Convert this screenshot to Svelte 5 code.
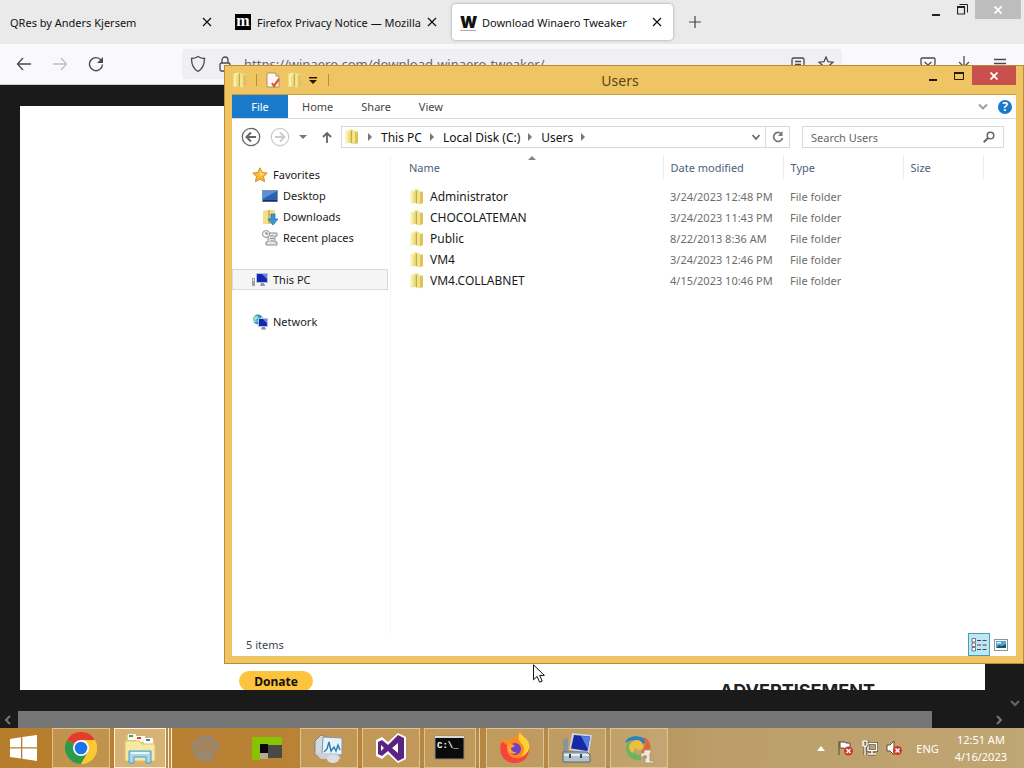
<script lang="ts">
    let tabs = [
        { title: 'QRes by Anders Kjersem', icon: '' },
        { title: 'Firefox Privacy Notice — Mozilla', icon: 'm' },
        { title: 'Download Winaero Tweaker', icon: 'w' },
    ];
    let active_tab = $state(2);

    let url = $state('https://winaero.com/download-winaero-tweaker/');
    let search = $state('');

    let ribbon = ['Home', 'Share', 'View'];
    let path = ['This PC', 'Local Disk (C:)', 'Users'];

    let favorites = [
        { name: 'Desktop', icon: 'desktop' },
        { name: 'Downloads', icon: 'downloads' },
        { name: 'Recent places', icon: 'recent' },
    ];

    let folders = [
        { name: 'Administrator', date: '3/24/2023 12:48 PM' },
        { name: 'CHOCOLATEMAN', date: '3/24/2023 11:43 PM' },
        { name: 'Public', date: '8/22/2013 8:36 AM' },
        { name: 'VM4', date: '3/24/2023 12:46 PM' },
        { name: 'VM4.COLLABNET', date: '4/15/2023 10:46 PM' },
    ];

    let apps = [
        { id: 'chrome', label: 'Google Chrome', look: 'open' },
        { id: 'explorer', label: 'File Explorer', look: 'open current stack' },
        { id: 'paw', label: 'Paw', look: '' },
        { id: 'green', label: 'Screen tool', look: '' },
        { id: 'perf', label: 'Performance Monitor', look: 'open' },
        { id: 'vs', label: 'Visual Studio', look: 'open' },
        { id: 'cmd', label: 'Command Prompt', look: 'open stack' },
        { id: 'firefox', label: 'Firefox', look: 'open' },
        { id: 'pc', label: 'System Properties', look: 'open' },
        { id: 'tweak', label: 'Installer', look: 'open' },
    ];
</script>

{#snippet folder()}
    <svg width="16" height="16" viewBox="0 0 16 16">
        <path d="M1.500 2 6 .5V14l-4.500 1z" fill="#f8efb0" />
        <path d="M6 .5h3V15L6 14z" fill="#e6d56c" />
        <path d="M7.500 2 10 1l1 1.500 3-.5v12l-3.500 1.500-3-1z" fill="#f2e48c" />
        <path d="M11 3h3v11l-3 1z" fill="#dcc65c" />
        <path d="M4 3h2v11H4z" fill="#eddf82" />
        <path d="M12 9h2v4h-2z" fill="#eab85a" />
        <path d="M7.500 2v12" stroke="#b5a040" stroke-width=".8" />
    </svg>
{/snippet}

{#snippet cross(size)}
    <svg width={size} height={size} viewBox="0 0 10 10"><path d="m1 1 8 8M9 1 1 9" fill="none" stroke="currentColor" stroke-width="1.200" /></svg>
{/snippet}

{#snippet bold_cross()}
    <svg width="8" height="8" viewBox="0 0 8 8"><path d="m.5.5 7 7m0-7-7 7" stroke="#fff" stroke-width="1.800" /></svg>
{/snippet}

{#snippet screen(x, y, w, h)}
    <rect {x} {y} width={w} height={h} fill="#b9c3d4" />
    <rect x={x + 1} y={y + 1} width={w - 2} height={h - 2} fill="#1526b4" />
    <path d="M{x + w / 2} {y + 1}h{w / 2 - 1}v{h / 2}z" fill="#6d86ee" />
{/snippet}

<div class="desktop">
    <main class="browser">
        <header class="tabbar">
            {#each tabs as tab, i}
                <div class="tab" class:active={i === active_tab}>
                    <button class="tab-title" onclick={() => active_tab = i}>
                        {#if tab.icon === 'm'}
                            <span class="moz">m</span>
                        {:else if tab.icon === 'w'}
                            <span class="win">W</span>
                        {/if}
                        <span class="tab-text">{tab.title}</span>
                    </button>
                    <button class="tab-close" aria-label="Close tab">{@render cross(10)}</button>
                </div>
            {/each}
            <button class="new-tab" aria-label="New tab">
                <svg width="14" height="14" viewBox="0 0 14 14"><path d="M7 1v12M1 7h12" stroke="#444" stroke-width="1.200" /></svg>
            </button>
            <div class="browser-controls">
                <button aria-label="Minimize"><svg width="8" height="14" viewBox="0 0 8 14"><path d="M0 11h8v2H0z" fill="#222" /></svg></button>
                <button aria-label="Restore"><svg width="11" height="11" viewBox="0 0 11 11" fill="none" stroke="#222"><path d="M.5 3h7v7h-7z" stroke-width="1.200" /><path d="M2.500.5h8v8" /><path d="M0 3h8" stroke-width="2" /></svg></button>
                <button class="grey-close" aria-label="Close">{@render bold_cross()}</button>
            </div>
        </header>

        <div class="toolbar">
            <button aria-label="Back"><svg width="16" height="16" viewBox="0 0 16 16" fill="none" stroke="#4a4a50" stroke-width="1.300"><path d="M15 8H1.500M7 2 1.500 8 7 14" /></svg></button>
            <button aria-label="Forward"><svg width="16" height="16" viewBox="0 0 16 16" fill="none" stroke="#c0c0c4" stroke-width="1.300"><path d="M1 8h13.500M9 2l5.500 6L9 14" /></svg></button>
            <button aria-label="Reload"><svg width="16" height="16" viewBox="0 0 16 16"><path d="M13 4A6.500 6.500 0 1 0 14.500 8.500" fill="none" stroke="#4a4a50" stroke-width="1.400" /><path d="M15 1v6H9z" fill="#4a4a50" /></svg></button>
            <div class="urlbar">
                <svg width="16" height="18" viewBox="0 0 16 18" fill="none" stroke="#4a4a50" stroke-width="1.300"><path d="M8 1.500c2 1.500 4 2 6.500 2 0 6-1.500 10-6.500 13C3 13.500 1.500 9.500 1.500 3.500c2.500 0 4.500-.5 6.500-2z" /></svg>
                <svg width="12" height="16" viewBox="0 0 12 16" fill="none" stroke="#4a4a50" stroke-width="1.300"><rect x="1" y="7" width="10" height="8" rx="1.500" /><path d="M3 7V4a3 3 0 0 1 6 0v3" /></svg>
                <input type="text" aria-label="Address" bind:value={url} />
                <svg width="14" height="14" viewBox="0 0 14 14" fill="none" stroke="#4a4a50" stroke-width="1.300"><rect x="1" y="1" width="12" height="12" rx="1.500" /><path d="M4 4.500h6M4 7.500h6M4 10h4" /></svg>
                <svg width="16" height="16" viewBox="0 0 16 16" fill="none" stroke="#4a4a50" stroke-width="1.300"><path d="m8 1 2 4.700 5 .5-3.800 3.400 1.200 5L8 12l-4.400 2.600 1.200-5L1 6.200l5-.5z" /></svg>
            </div>
            <div class="tools">
                <button aria-label="Pocket"><svg width="16" height="14" viewBox="0 0 16 14" fill="none" stroke="#4a4a50" stroke-width="1.300"><path d="M2 1h12a1 1 0 0 1 1 1v4a7 7 0 0 1-14 0V2a1 1 0 0 1 1-1z" /><path d="m4.500 5 3.500 3 3.500-3" /></svg></button>
                <button aria-label="Downloads"><svg width="14" height="16" viewBox="0 0 14 16" fill="none" stroke="#4a4a50" stroke-width="1.300"><path d="M7 0v11M2 6l5 5 5-5M1 15h12" /></svg></button>
                <button aria-label="Menu"><svg width="14" height="14" viewBox="0 0 14 14" stroke="#4a4a50" stroke-width="1.300"><path d="M1 2.500h12M1 6.500h12M1 11h12" /></svg></button>
            </div>
        </div>

        <div class="viewport">
            <div class="sheet">
                <div class="sheet-end">
                    <button class="donate">Donate</button>
                    <strong class="advert">ADVERTISEMENT</strong>
                </div>
            </div>
            <svg class="v-down" width="10" height="7" viewBox="0 0 10 7"><path d="m1 1 4 4 4-4" fill="none" stroke="#666" stroke-width="2" /></svg>
        </div>
        <div class="hscroll">
            <svg width="8" height="10" viewBox="0 0 8 10"><path d="M6 1 2 5l4 4" fill="none" stroke="#777" stroke-width="2" /></svg>
            <div class="thumb"></div>
            <svg class="h-right" width="8" height="10" viewBox="0 0 8 10"><path d="m2 1 4 4-4 4" fill="none" stroke="#777" stroke-width="2" /></svg>
        </div>
    </main>

    <section class="explorer">
        <header class="titlebar">
            <div class="quick">
                {@render folder()}
                <i></i>
                <svg width="16" height="16" viewBox="0 0 16 16"><path d="M2 1h9l3 3v11H2z" fill="#fdf8f4" stroke="#b58f6a" /><path d="M11 1v3h3" fill="#ddd" stroke="#b58f6a" /><path d="m7 11 2 3 5-7" fill="none" stroke="#d95b35" stroke-width="2.200" /></svg>
                {@render folder()}
                <svg class="more" width="8" height="7" viewBox="0 0 8 7"><path d="M0 0h8v1.500H0zM0 3h8L4 7z" fill="#2c1600" /></svg>
                <i></i>
            </div>
            <h1>Users</h1>
            <div class="controls">
                <button aria-label="Minimize"><svg width="8" height="12" viewBox="0 0 8 12"><path d="M0 9h8v2H0z" fill="#2c1600" /></svg></button>
                <button aria-label="Maximize"><svg width="10" height="8" viewBox="0 0 10 8"><path d="M.5 1h9v6.500h-9z" fill="none" stroke="#2c1600" /><path d="M0 1h10" stroke="#2c1600" stroke-width="2" /></svg></button>
                <button class="red-close" aria-label="Close">{@render bold_cross()}</button>
            </div>
        </header>

        <nav class="ribbon">
            <button class="file">File</button>
            {#each ribbon as item}
                <button>{item}</button>
            {/each}
            <svg class="expand" width="10" height="8" viewBox="0 0 10 8"><path d="m1 1.500 4 4 4-4" fill="none" stroke="#999" stroke-width="1.800" /></svg>
            <button class="help" aria-label="Help">?</button>
        </nav>

        <div class="address">
            <button aria-label="Back"><svg width="20" height="20" viewBox="0 0 20 20" fill="none" stroke="#666"><circle cx="10" cy="10" r="8.700" stroke-width="1.300" /><path d="M15 10H6M10 5.500 5.500 10l4.500 4.500" stroke-width="2" /></svg></button>
            <button aria-label="Forward"><svg width="20" height="20" viewBox="0 0 20 20" fill="none" stroke="#ccc"><circle cx="10" cy="10" r="8.700" stroke-width="1.200" /><path d="M5 10h9M10 5.500l4.500 4.500-4.500 4.500" stroke-width="2" /></svg></button>
            <button aria-label="Recent locations"><svg width="8" height="4" viewBox="0 0 8 4"><path d="M0 0h8L4 4z" fill="#777" /></svg></button>
            <button class="up" aria-label="Up"><svg width="10" height="12" viewBox="0 0 10 12"><path d="M5 12V2M1 6l4-4 4 4" fill="none" stroke="#666" stroke-width="1.800" /></svg></button>
            <div class="crumbs">
                {@render folder()}
                {#each path as part}
                    <svg class="sep" width="4" height="8" viewBox="0 0 4 8"><path d="M0 0v8l4-4z" fill="#777" /></svg>
                    <button>{part}</button>
                {/each}
                <svg class="sep" width="4" height="8" viewBox="0 0 4 8"><path d="M0 0v8l4-4z" fill="#777" /></svg>
                <button class="history" aria-label="Previous locations"><svg width="8" height="7" viewBox="0 0 8 7"><path d="m.5 1 3.500 4 3.500-4" fill="none" stroke="#666" stroke-width="1.800" /></svg></button>
                <button class="refresh" aria-label="Refresh"><svg width="12" height="12" viewBox="0 0 12 12"><path d="M9.500 3A4.500 4.500 0 1 0 10.500 7" fill="none" stroke="#777" stroke-width="1.700" /><path d="M10.500 0v5H6z" fill="#777" /></svg></button>
            </div>
            <label class="search">
                <input type="text" aria-label="Search Users" placeholder="Search Users" bind:value={search} />
                <svg width="12" height="12" viewBox="0 0 12 12" fill="none" stroke="#666"><circle cx="7.500" cy="4.500" r="3.300" stroke-width="1.500" /><path d="m5 7-4.300 4.300" stroke-width="2" /></svg>
            </label>
        </div>

        <div class="body">
            <aside>
                <a href="#favorites">
                    <svg width="16" height="16" viewBox="0 0 16 16"><path d="m8 .8 2.200 4.700 5.100.6-3.800 3.500 1.100 5.100L8 12.200l-4.600 2.500 1.100-5.100L.7 6.100l5.100-.6z" fill="#fbb93c" stroke="#dd8a24" /><path d="m8 3 1.500 3.300 3 .4L8 9z" fill="#ffe38c" /></svg>
                    Favorites
                </a>
                {#each favorites as item}
                    <a class="sub" href="#{item.icon}">
                        <svg width="16" height="16" viewBox="0 0 16 16">
                            {#if item.icon === 'desktop'}
                                <rect x=".5" y="2.500" width="15" height="11" fill="#2a60b4" stroke="#7d92ae" />
                                <path d="M1 3h14L1 11z" fill="#5a90d8" />
                                <path d="M1 12h14v1.500H1z" fill="#1d2f50" />
                            {:else if item.icon === 'downloads'}
                                <path d="M1 2 6 1h7v14H1z" fill="#efdf88" />
                                <path d="M6 1h2v14l-2-1z" fill="#cfb850" />
                                <path d="M9 5h4v5h3l-5 6-5-6h3z" fill="#3796dc" stroke="#1b6db0" stroke-width=".7" />
                            {:else}
                                <path d="M4 3h11v3h-2v6h2v3H4v-3h2V6H4z" fill="#e4e6e8" stroke="#8a9096" />
                                <path d="M8 6h4M8 8.500h4M8 11h4" stroke="#8a9096" />
                                <circle cx="4" cy="4" r="3.500" fill="#f7f7f7" stroke="#8a9096" />
                                <path d="M4 2v2h2" fill="none" stroke="#667" />
                            {/if}
                        </svg>
                        {item.name}
                    </a>
                {/each}
                <a class="group selected" href="#this-pc">
                    <svg width="16" height="16" viewBox="0 0 16 16">
                        <path d="M0 6h3v8H0z" fill="#9aa3a8" /><path d="M1 7h1v2H1z" fill="#dfe" />
                        {@render screen(4, 1, 12, 10)}
                        <path d="M9 11h3l1 3H8z" fill="#8d97a5" />
                    </svg>
                    This PC
                </a>
                <a class="group" href="#network">
                    <svg width="16" height="16" viewBox="0 0 16 16">
                        <circle cx="6" cy="5.500" r="5" fill="#2a9ac4" /><path d="M2 3c2-2 5-1 4 1S3 5 3 8C1 7 1 5 2 3z" fill="#9fe0b8" /><path d="M1 7c3 1 6 0 9-4" fill="none" stroke="#b9ecf5" />
                        {@render screen(6, 4, 10, 9)}
                        <path d="M10 13h3l1 2.500H9z" fill="#7d8a98" />
                    </svg>
                    Network
                </a>
            </aside>

            <div class="list">
                <table>
                    <thead>
                        <tr>
                            <th class="name">Name<svg class="sort" width="8" height="4" viewBox="0 0 8 4"><path d="M0 4h8L4 0z" fill="#7a8794" /></svg></th>
                            <th>Date modified</th>
                            <th>Type</th>
                            <th class="size">Size</th>
                            <th class="rest"></th>
                        </tr>
                    </thead>
                    <tbody>
                        {#each folders as item}
                            <tr>
                                <td class="name"><span>{@render folder()}{item.name}</span></td>
                                <td>{item.date}</td>
                                <td>File folder</td>
                                <td></td>
                                <td></td>
                            </tr>
                        {/each}
                    </tbody>
                </table>
            </div>
        </div>

        <footer class="status">
            <span>{folders.length} items</span>
            <button class="on" aria-label="Details view"><svg width="16" height="14" viewBox="0 0 16 14" fill="none"><path d="M1 .5h3.500v3.500H1zM1 5h3.500v3.500H1zM1 9.500h3.500v3.500H1z" fill="#fff" stroke="#557" stroke-width=".8" /><path d="M6 2.500h4m1.500 0h4M6 7h4m1.500 0h4M6 11.500h4m1.500 0h4" stroke="#3b4a5a" /></svg></button>
            <button aria-label="Thumbnail view"><svg width="14" height="12" viewBox="0 0 14 12"><rect x=".5" y=".5" width="13" height="11" fill="#fff" stroke="#8596a5" /><path d="M2 2h10v7H2z" fill="#5aa6d8" /><path d="m2 9 3-3 3 1 4-2v4z" fill="#1d5a62" /><path d="M3 3h4v1.500H3z" fill="#e8f5fb" /></svg></button>
        </footer>
    </section>

    <svg class="pointer" width="12" height="19" viewBox="0 0 12 19"><path d="M.5.8v15l3.600-3.400 2.500 5.800 2.600-1.100-2.500-5.700h4.700z" fill="#fff" stroke="#111" /></svg>

    <footer class="taskbar">
        <button class="start" aria-label="Start">
            <svg width="28" height="26" viewBox="0 0 28 26"><path d="M0 4 11 2.300V12.300H0zM12.300 2.100 27 0v12.300H12.300zM0 13.600h11v10L0 22zM12.300 13.600H27V26l-14.700-2.200z" fill="#fff" /></svg>
        </button>
        {#each apps as app}
            <button class="app {app.look}" aria-label={app.label}>
                <svg width="32" height="32" viewBox="0 0 32 32">
                    {#if app.id === 'chrome'}
                        <circle cx="16" cy="16" r="16" fill="#fcc934" />
                        <path d="M16 16 2.100 8A16 16 0 0 1 29.900 8z" fill="#e33b2e" />
                        <path d="M2.100 8A16 16 0 0 0 16 32l7-12-7-4z" fill="#2b9a4b" />
                        <path d="M16 8h13.900A16 16 0 0 1 16 32l7-12z" fill="#fcc934" />
                        <circle cx="16" cy="16" r="8" fill="#fff" /><circle cx="16" cy="16" r="6.300" fill="#1a73e8" />
                    {:else if app.id === 'explorer'}
                        <path d="M2 3h9l2 3h9l2 2h6v20H2z" fill="#e6cb71" />
                        <path d="M4 2h8v6H4zM12 4h9v6h-9zM20 6h9v6h-9z" fill="#fbfbf3" />
                        <path d="M5 3h4v2H5z" fill="#37a35b" /><path d="M13 5h4v2h-4z" fill="#d6472b" /><path d="M22 7h4v2h-4z" fill="#2f80c8" />
                        <path d="M1 9h14l3 3h13v17H1z" fill="#f7e9a4" stroke="#dcc06a" />
                        <path d="M5 31V19h22v12h-5v-6H10v6z" fill="#a5d8ef" stroke="#4b9cc8" />
                        <path d="M7 21h18" stroke="#e7f7fd" stroke-width="2" />
                    {:else if app.id === 'paw'}
                        <g fill="#8f8a88" opacity=".7"><circle cx="16" cy="18" r="11" opacity=".6" /><circle cx="6" cy="13" r="4" /><circle cx="13" cy="7" r="4" /><circle cx="21" cy="7" r="4" /><circle cx="27" cy="14" r="4" /><path d="M8 26c0-5 4-9 8-9s9 4 9 9-5 4-9 3-8 2-8-3z" /><path d="M4 18h5v5H4z" /></g>
                    {:else if app.id === 'green'}
                        <path d="M1 5h30v9H9v14H1z" fill="#86c400" /><path d="M9 12h8v9H9z" fill="#080808" /><path d="M17 13h14v13H17z" fill="#4c4744" /><path d="M9 21h8v6H9z" fill="#b5aa95" />
                    {:else if app.id === 'perf'}
                        <path d="m2 9 6-6 5 2v21l-11-3z" fill="#d4d9dc" stroke="#7c858b" />
                        <path d="m10 5 19 1v17l-20-1z" fill="#e7f2f9" stroke="#8397a6" />
                        <path d="m11 20 3-3 2-7 2 9 3-4 2 4 2-6 2 5" fill="none" stroke="#287bb4" stroke-width="1.400" />
                        <path d="M2 21h22l4 6H8z" fill="#cbd1d4" /><ellipse cx="20" cy="27" rx="6" ry="4" fill="#d9dfe3" />
                    {:else if app.id === 'vs'}
                        <path d="m23 1 8 4v22l-8 4-10-9-6 5-6-3V8l6-3 6 5z" fill="#fff" />
                        <path d="m23 3 6 3v20l-6 3-10-10-6 5-4-2V10l4-2 6 5zM23 11l-6 5 6 5zM6 13v6l3-3z" fill="#5d2380" fill-rule="evenodd" />
                    {:else if app.id === 'cmd'}
                        <path d="M1 4h29v23H1z" fill="#0b0b0b" stroke="#888" /><path d="M1 4h29v2H1z" fill="#dadada" />
                        <text x="3" y="16" class="prompt">C:\_</text>
                    {:else if app.id === 'firefox'}
                        <path d="M17 4c2-1 3-2 4-4 1 4 5 5 7 9 6 11-1 22-12 22S-1 21 2 11c0-2 1-4 2-5l2 4c2-2 4-3 7-3 1 0 3-1 4-3z" fill="#ff8a1c" />
                        <path d="M2 11C-1 21 5 31 16 31c9 0 14-7 14-14-3 7-7 10-13 9-7 0-10-6-8-12l-5-4z" fill="#f5294c" opacity=".75" />
                        <path d="M21 0c-2 4-2 8 1 11s5 8 0 13c8-2 10-9 7-15-2-4-7-5-8-9z" fill="#ffcf36" />
                        <circle cx="16" cy="17" r="6" fill="#7140c4" /><path d="M8 14c2-3 6-2 8 0l-4 2c0 3 3 5 6 4-4 4-10 1-10-6z" fill="#ffa52b" />
                    {:else if app.id === 'pc'}
                        <path d="m2 8 5-2v13l-5 2z" fill="#89939b" /><path d="m11 1 20 2-3 18-20-3z" fill="#cbd4dd" />
                        <path d="m13 3 16 1.500L26.500 19 10 16.500z" fill="#1429a6" /><path d="m20 4 9 .5-2 13z" fill="#597ce4" />
                        <path d="M2 20h24l3 3v7H2z" fill="#b4c3cb" stroke="#576872" /><path d="M3 23h25" stroke="#e4edf0" stroke-width="2" /><path d="M9 22v4m11-4v4" stroke="#384850" stroke-width="2" />
                    {:else}
                        <path d="M2 11C4 4 16 1 25 9l-5 3C13 7 7 8 2 11z" fill="#2b83bd" />
                        <path d="M21 5c7 3 9 13 3 19l-6-4c3-3 5-7 3-15z" fill="#dc6934" />
                        <path d="M5 10c-5 9 1 20 13 18v-5c-7 1-10-6-5-12z" fill="#6eb45d" />
                        <path d="M7 12c5-7 13-4 13 2 0 5-5 5-8 2l-2 5c-4-2-5-6-3-9z" fill="#edbf3c" />
                        <path d="M18 21h3v-3h7v3h-1v8h4v2h-9v-6h-4z" fill="#f3ead6" stroke="#a6927b" stroke-width=".8" /><circle cx="22" cy="25" r="2" fill="#b28d9b" />
                    {/if}
                </svg>
            </button>
        {/each}
        <div class="tray">
            <svg class="hidden-icons" width="8" height="5" viewBox="0 0 8 5"><path d="M0 5h8L4 0z" fill="#fff" /></svg>
            <svg width="17" height="16" viewBox="0 0 17 16"><path d="M2 1v14M3 2h5l1 1h4v6H8L7 8H3z" fill="#fff" stroke="#5c4c30" /><circle cx="11.500" cy="11" r="4.500" fill="#d2352c" /><path d="m9.500 9 4 4m0-4-4 4" stroke="#fff" stroke-width="1.500" /></svg>
            <svg width="16" height="16" viewBox="0 0 16 16" fill="none"><path d="M6 3.500h8.500v7H6zM10 11v3M6 14h8" stroke="#5c4c30" stroke-width="3" /><path d="M6 3.500h8.500v7H6zM10 11v3M6 14h8" stroke="#fff" stroke-width="1.500" /><path d="M1 1h4v4L3 7v8" stroke="#5c4c30" stroke-width="3" /><path d="M1 1h4v4L3 7v8M1 1v4l2 2" stroke="#fff" stroke-width="1.400" /></svg>
            <svg width="17" height="16" viewBox="0 0 17 16"><path d="M1 5h3l4-4v14l-4-4H1z" fill="#fff" stroke="#5c4c30" /><circle cx="11.500" cy="10.500" r="4.500" fill="#d2352c" /><path d="m9.500 8.500 4 4m0-4-4 4" stroke="#fff" stroke-width="1.500" /></svg>
            <span class="lang">ENG</span>
            <time>12:51 AM<br />4/16/2023</time>
        </div>
    </footer>
</div>

<style>
    :global(body) {
        margin: 0;
        font-family: "Noto Sans", "Open Sans", sans-serif;
        font-size: 11px;
        color: #111;
    }

    .desktop {
        position: relative;
        display: flex;
        flex-direction: column;
        height: 100vh;
        overflow: hidden;
    }

    button {
        display: flex;
        align-items: center;
        justify-content: center;
        padding: 0;
        border: 0;
        background: none;
        font: inherit;
        color: inherit;
    }

    input {
        flex: 1;
        min-width: 0;
        padding: 0;
        border: 0;
        outline: none;
        background: none;
        font: inherit;
    }

    svg {
        flex: none;
    }

    /* browser */
    .browser {
        flex: 1;
        min-height: 0;
        display: flex;
        flex-direction: column;
        background: #1b1a1a;
    }

    .tabbar {
        display: flex;
        align-items: center;
        gap: 4px;
        height: 44px;
        padding-left: 2px;
        background: #eaeaeb;
    }

    .tab {
        display: flex;
        box-sizing: border-box;
        width: 221px;
        height: 36px;
        padding: 0 11px 0 8px;
        border-radius: 4px;
    }

    .tab.active {
        background: #fff;
        box-shadow: 0 0 3px #999;
    }

    .tab-title {
        flex: 1;
        min-width: 0;
        justify-content: flex-start;
        gap: 6px;
    }

    .tab-text {
        white-space: nowrap;
    }

    .tab-close {
        width: 10px;
    }

    .moz {
        flex: none;
        width: 16px;
        background: #000;
        color: #fff;
        font: bold 16px/14px "Liberation Serif", serif;
        padding-bottom: 2px;
    }

    .win {
        flex: none;
        width: 16px;
        font: 900 16px/16px Inter, sans-serif;
        border-bottom: 1px solid #aaa;
    }

    .new-tab {
        width: 36px;
        height: 36px;
    }

    .browser-controls {
        display: flex;
        align-self: flex-start;
        margin-left: auto;
        margin-right: 3px;
    }

    .browser-controls button {
        width: 26px;
        height: 19px;
    }

    .browser-controls .grey-close {
        width: 46px;
        background: #bdbdbe;
    }

    .toolbar {
        display: flex;
        align-items: center;
        height: 40px;
        padding: 0 6px;
        background: #f9f9fb;
        border-bottom: 1px solid #ccc;
    }

    .toolbar button {
        width: 36px;
        height: 32px;
    }

    .urlbar {
        flex: 1;
        display: flex;
        align-items: center;
        gap: 13px;
        height: 30px;
        margin-left: 68px;
        padding: 0 8px;
        border-radius: 4px;
        background: #f0f0f3;
    }

    .urlbar input {
        font-size: 13px;
        color: #66666c;
    }

    .tools {
        display: flex;
        margin-left: 68px;
    }

    .viewport {
        position: relative;
        flex: 1;
        min-height: 0;
        display: flex;
        padding: 21px 39px 21px 20px;
    }

    .sheet {
        flex: 1;
        display: flex;
        align-items: flex-end;
        overflow: hidden;
        background: #fff;
    }

    .sheet-end {
        flex: 1;
        display: flex;
        align-items: flex-start;
        height: 19px;
        padding: 0 110px 0 219px;
        justify-content: space-between;
    }

    .donate {
        width: 74px;
        height: 20px;
        border-radius: 10px;
        background: #fcc43c;
        font-size: 12px;
        font-weight: bold;
    }

    .advert {
        margin-top: 9px;
        font: 700 18px/22px Inter, sans-serif;
        color: #222;
    }

    .v-down {
        position: absolute;
        right: 4px;
        bottom: 4px;
    }

    .hscroll {
        display: flex;
        align-items: center;
        gap: 6px;
        height: 17px;
        padding: 0 21px 0 4px;
    }

    .thumb {
        flex: 1;
        height: 17px;
        background: #767576;
    }

    .h-right {
        margin-left: 57px;
    }

    /* explorer window */
    .explorer {
        position: absolute;
        top: 65px;
        right: 0;
        bottom: 104px;
        left: 224px;
        display: flex;
        flex-direction: column;
        box-sizing: border-box;
        border: 1px solid #b98b35;
        padding: 0 7px 7px;
        background: #efc563;
    }

    .titlebar {
        display: grid;
        grid-template-columns: 1fr auto 1fr;
        align-items: center;
        height: 28px;
    }

    .quick {
        display: flex;
        align-items: center;
        gap: 6px;
    }

    .quick i {
        width: 1px;
        height: 12px;
        margin: 0 2px;
        background: #c08c45;
    }

    .quick .more {
        margin-right: 3px;
    }

    h1 {
        margin: 0;
        padding-right: 8px;
        font-size: 14px;
        font-weight: normal;
        color: #5a431c;
    }

    .controls {
        display: flex;
        align-self: start;
        justify-content: flex-end;
    }

    .controls button {
        width: 26px;
        height: 19px;
    }

    .controls .red-close {
        width: 44px;
        background: #c9504c;
    }

    .ribbon {
        display: flex;
        align-items: center;
        height: 23px;
        padding-right: 4px;
        border-top: 1px solid #c9a04a;
        border-bottom: 1px solid #dadbdc;
        background: #fff;
        color: #444;
    }

    .ribbon button {
        height: 23px;
        padding: 0 14px;
    }

    .ribbon .file {
        width: 56px;
        padding: 0;
        background: #1979ca;
        color: #fff;
    }

    .expand {
        margin-left: auto;
        margin-right: 10px;
    }

    .ribbon .help {
        width: 14px;
        height: 14px;
        padding: 0;
        border-radius: 50%;
        background: #1979ca;
        color: #fff;
        font-size: 12px;
        font-weight: bold;
    }

    .address {
        display: flex;
        align-items: center;
        gap: 9px;
        height: 36px;
        padding: 0 12px 0 9px;
        background: #fff;
    }

    .address .up {
        margin-left: 6px;
    }

    .crumbs {
        flex: 1;
        display: flex;
        align-items: center;
        box-sizing: border-box;
        height: 22px;
        padding-left: 2px;
        border: 1px solid #d9d9d9;
        font-size: 12px;
    }

    .sep {
        margin: 0 9px 0 8px;
    }

    .crumbs .history {
        margin-left: auto;
        width: 18px;
        height: 20px;
    }

    .crumbs .refresh {
        width: 24px;
        height: 20px;
        border-left: 1px solid #d9d9d9;
    }

    .search {
        display: flex;
        align-items: center;
        box-sizing: border-box;
        width: 202px;
        height: 22px;
        margin-left: 3px;
        padding: 0 8px;
        border: 1px solid #d9d9d9;
    }

    .search input::placeholder {
        color: #666;
        opacity: 1;
    }

    .body {
        flex: 1;
        min-height: 0;
        display: flex;
        background: #fff;
    }

    aside {
        box-sizing: border-box;
        width: 159px;
        padding: 9px 2px 0 0;
        border-right: 1px solid #f4f4f4;
    }

    aside a {
        display: flex;
        align-items: center;
        gap: 5px;
        box-sizing: border-box;
        height: 21px;
        padding-left: 20px;
        color: #1a1a1a;
        text-decoration: none;
    }

    aside .sub {
        padding-left: 30px;
    }

    aside .group {
        margin-top: 21px;
    }

    aside .selected {
        padding-left: 19px;
        border: 1px solid #dadada;
        background: #f5f5f5;
    }

    .list {
        flex: 1;
        min-width: 0;
        padding-left: 11px;
    }

    table {
        width: 100%;
        table-layout: fixed;
        border-collapse: collapse;
    }

    th, td {
        box-sizing: border-box;
        width: 120px;
        padding: 0 0 0 7px;
        text-align: left;
        font-weight: normal;
        white-space: nowrap;
    }

    th {
        position: relative;
        height: 24px;
        border-right: 1px solid #ececec;
        color: #4c607a;
    }

    th.name {
        width: 261px;
    }

    th.size {
        width: 80px;
    }

    th.rest {
        width: auto;
        border: 0;
    }

    .sort {
        position: absolute;
        top: 1px;
        left: calc(50% - 4px);
    }

    tbody::before {
        content: "";
        display: block;
        height: 7px;
    }

    td {
        height: 21px;
        color: #6d6d6d;
    }

    td.name {
        font-size: 12px;
        color: #1a1a1a;
    }

    td.name span {
        display: flex;
        align-items: center;
        gap: 5px;
    }

    .status {
        display: flex;
        align-items: center;
        height: 23px;
        padding: 0 4px 0 14px;
        background: #fff;
        color: #3c4450;
    }

    .status span {
        flex: 1;
    }

    .status button {
        box-sizing: border-box;
        width: 22px;
        height: 23px;
    }

    .status .on {
        border: 1px solid #3fa0bd;
        background: #c0e7f1;
    }

    .pointer {
        position: absolute;
        top: 664px;
        left: 533px;
    }

    /* taskbar */
    .taskbar {
        display: flex;
        gap: 4px;
        height: 40px;
        background: linear-gradient(90deg, #b67d2b, #b98236 30%, #b48a4a 55%, #bb9e69 70%, #c0a673);
    }

    .start {
        width: 48px;
    }

    .app {
        box-sizing: border-box;
        width: 58px;
        border: 1px solid transparent;
    }

    .app.open {
        border-color: #dcc391;
        background: rgba(225, 210, 170, 0.25);
    }

    .app.current {
        border-color: #fff2cd;
        background: rgba(245, 230, 190, 0.5);
    }

    .app.stack {
        width: 52px;
        margin-right: 6px;
        box-shadow: 3px 0 0 #b58a4b, 4px 0 0 #e5cf9f;
    }

    .app.current.stack {
        box-shadow: 2px 0 0 #b58a4b, 3px 0 0 #fff2cd, 5px 0 0 #b58a4b, 6px 0 0 #fff2cd;
    }

    .prompt {
        font: bold 9px "Liberation Mono", monospace;
        fill: #fff;
    }

    .tray {
        display: flex;
        align-items: center;
        gap: 8px;
        margin-left: auto;
        padding-right: 17px;
        color: #fff;
    }

    .hidden-icons {
        margin-right: 4px;
    }

    .lang {
        margin: 0 8px 0 5px;
    }

    time {
        text-align: center;
        line-height: 17px;
    }
</style>
